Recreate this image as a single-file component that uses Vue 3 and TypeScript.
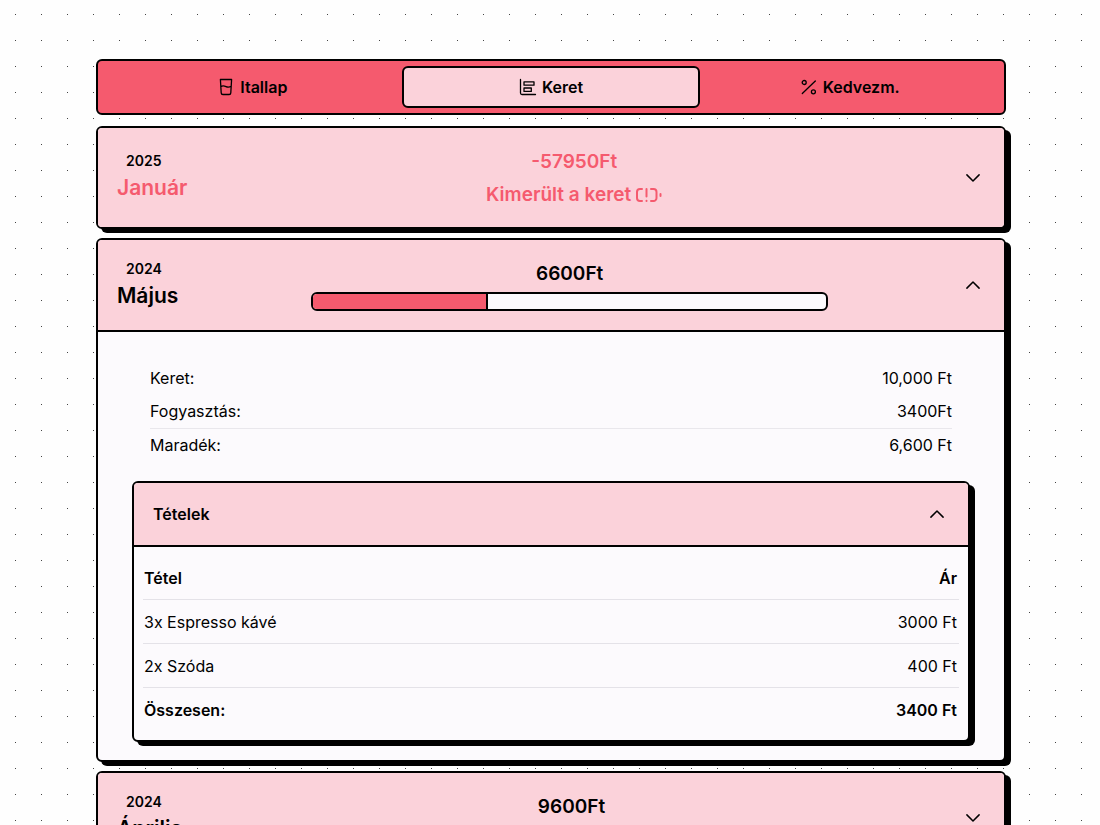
<script setup lang="ts">
import { reactive, ref } from 'vue'

interface Item {
  name: string
  price: string
}

interface Month {
  id: string
  year: string
  name: string
  balance: string
  depleted: boolean
  usedPercent: number
  open: boolean
  budget: string
  spent: string
  remaining: string
  items: Item[]
  itemsTotal: string
  itemsOpen: boolean
}

const tabs = [
  { id: 'drinks', label: 'Itallap' },
  { id: 'budget', label: 'Keret' },
  { id: 'discount', label: 'Kedvezm.' },
]
const activeTab = ref('budget')

const months = reactive<Month[]>([
  {
    id: '2025-01', year: '2025', name: 'Január', balance: '-57950Ft', depleted: true, usedPercent: 100,
    open: false, budget: '', spent: '', remaining: '', items: [], itemsTotal: '', itemsOpen: false,
  },
  {
    id: '2024-05', year: '2024', name: 'Május', balance: '6600Ft', depleted: false, usedPercent: 34,
    open: true, budget: '10,000 Ft', spent: '3400Ft', remaining: '6,600 Ft',
    items: [
      { name: '3x Espresso kávé', price: '3000 Ft' },
      { name: '2x Szóda', price: '400 Ft' },
    ],
    itemsTotal: '3400 Ft',
    itemsOpen: true,
  },
  {
    id: '2024-04', year: '2024', name: 'Április', balance: '9600Ft', depleted: false, usedPercent: 4,
    open: false, budget: '', spent: '', remaining: '', items: [], itemsTotal: '', itemsOpen: false,
  },
])
</script>

<template>
  <main class="page">
    <nav class="tabs">
      <button
        v-for="tab in tabs"
        :key="tab.id"
        type="button"
        class="tab"
        :class="{ active: tab.id === activeTab }"
        @click="activeTab = tab.id"
      >
        <svg v-if="tab.id === 'drinks'" class="icon" viewBox="0 0 18 18" aria-hidden="true">
          <path d="M3.400 1.500h11.200l-.8 13.400a1.700 1.700 0 0 1-1.700 1.600H5.900a1.700 1.700 0 0 1-1.700-1.600zM3.800 8.600c1.700-1.100 3.500-.8 5.200 0s3.500.7 5.200-.4" />
        </svg>
        <svg v-else-if="tab.id === 'budget'" class="icon" viewBox="0 0 18 18" aria-hidden="true">
          <path d="M1.500 1.500v13.500a1.500 1.500 0 0 0 1.500 1.500H16.500M5 3.800h10v3.400H5zM5 10h7.300v3.400H5z" />
        </svg>
        <svg v-else class="icon" viewBox="0 0 18 18" aria-hidden="true">
          <path d="M15.300 3L2.300 15.500" />
          <circle cx="4.200" cy="4.500" r="2" />
          <circle cx="13.400" cy="13.800" r="2" />
        </svg>
        <span>{{ tab.label }}</span>
      </button>
    </nav>

    <section v-for="month in months" :key="month.id" class="card" :class="{ depleted: month.depleted }">
      <button type="button" class="card-head" :aria-expanded="month.open" @click="month.open = !month.open">
        <span class="date">
          <span class="year">{{ month.year }}</span>
          <span class="name">{{ month.name }}</span>
        </span>
        <span class="status">
          <span class="amount">{{ month.balance }}</span>
          <span v-if="month.depleted" class="amount warning">
            Kimerült a keret
            <svg class="battery" viewBox="0 0 27 16" aria-hidden="true">
              <path d="M7 2H5a3 3 0 0 0-3 3v6a3 3 0 0 0 3 3h2M16 2h2.500a3 3 0 0 1 3 3v6a3 3 0 0 1-3 3H16M11.500 2v7.500M11.500 13.700v.3M25.500 7v2" />
            </svg>
          </span>
          <span v-else class="meter" role="progressbar" :aria-valuenow="month.usedPercent" aria-valuemin="0" aria-valuemax="100">
            <span class="meter-fill" :style="{ width: month.usedPercent + '%' }"></span>
          </span>
        </span>
        <svg class="chevron" :class="{ up: month.open }" viewBox="0 0 24 24" aria-hidden="true">
          <path d="M5.900 8.900L12 15l6.100-6.100" />
        </svg>
      </button>

      <div v-if="month.open" class="card-body">
        <dl class="summary">
          <div class="line"><dt>Keret:</dt><dd>{{ month.budget }}</dd></div>
          <div class="line"><dt>Fogyasztás:</dt><dd>{{ month.spent }}</dd></div>
          <div class="line total"><dt>Maradék:</dt><dd>{{ month.remaining }}</dd></div>
        </dl>

        <section class="card items">
          <button
            type="button"
            class="items-head"
            :aria-expanded="month.itemsOpen"
            @click="month.itemsOpen = !month.itemsOpen"
          >
            <span>Tételek</span>
            <svg class="chevron" :class="{ up: month.itemsOpen }" viewBox="0 0 24 24" aria-hidden="true">
              <path d="M5.900 8.900L12 15l6.100-6.100" />
            </svg>
          </button>
          <div v-if="month.itemsOpen" class="items-body">
            <table>
              <thead>
                <tr><th scope="col">Tétel</th><th scope="col">Ár</th></tr>
              </thead>
              <tbody>
                <tr v-for="item in month.items" :key="item.name">
                  <td>{{ item.name }}</td>
                  <td>{{ item.price }}</td>
                </tr>
              </tbody>
              <tfoot>
                <tr><th scope="row">Összesen:</th><td>{{ month.itemsTotal }}</td></tr>
              </tfoot>
            </table>
          </div>
        </section>
      </div>
    </section>
  </main>
</template>

<style>
body {
  background-color: #fefefe;
  background-image: linear-gradient(#fefefe 25px, transparent 25px), linear-gradient(90deg, #444 1px, transparent 1px);
  background-size: 26px 26px;
  background-position: 15px 15px;
}
</style>

<style scoped>
.page {
  padding: 59px 94px 0 96px;
  font-family: Inter, "Liberation Sans", sans-serif;
  font-size: 16px;
  line-height: 24px;
  color: #000;
}

button {
  font: inherit;
  color: inherit;
  cursor: pointer;
}

svg {
  fill: none;
  stroke: currentColor;
  stroke-linecap: round;
  stroke-linejoin: round;
}

.tabs {
  display: grid;
  grid-template-columns: repeat(3, 1fr);
  margin-bottom: 11px;
  padding: 5px;
  border: 2px solid #000;
  border-radius: 6px;
  background: #f55a6e;
}

.tab {
  display: flex;
  align-items: center;
  justify-content: center;
  gap: 5px;
  height: 42px;
  padding: 0;
  border: 2px solid transparent;
  border-radius: 6px;
  background: transparent;
  font-weight: 600;
}

.tab.active {
  border-color: #000;
  background: #fbd2da;
}

.icon {
  width: 18px;
  height: 18px;
  stroke-width: 1.3;
}

.card {
  margin-bottom: 9px;
  border: 2px solid #000;
  border-radius: 6px;
  background: #fcfafd;
  box-shadow: 5px 4px 0 #000;
  overflow: hidden;
}

.card-head,
.items-head {
  display: flex;
  align-items: center;
  width: 100%;
  border: 0;
  background: #fbd2da;
}

.card-head {
  padding: 16px 19px;
  font-weight: 600;
}

.date {
  display: flex;
  flex-direction: column;
  align-items: flex-start;
}

.year {
  padding-left: 9px;
  font-size: 14px;
  line-height: 20px;
}

.name {
  font-size: 21px;
  line-height: 33px;
}

.status {
  display: flex;
  flex: 1;
  flex-direction: column;
  align-items: center;
  padding-top: 1px;
}

.amount {
  display: flex;
  align-items: center;
  gap: 4px;
  font-size: 19px;
  line-height: 33px;
}

.depleted .name,
.depleted .amount {
  color: #f55a6e;
}

.battery {
  width: 27px;
  height: 16px;
  stroke-width: 2;
}

.meter {
  box-sizing: border-box;
  width: 66%;
  height: 19px;
  margin: 2px 0 3px;
  border: 2px solid #000;
  border-radius: 6px;
  background: #fcfafd;
  overflow: hidden;
}

.meter-fill {
  display: block;
  box-sizing: border-box;
  height: 100%;
  border-right: 2px solid #000;
  background: #f55a6e;
}

.chevron {
  width: 24px;
  height: 24px;
  stroke-width: 1.5;
}

.chevron.up {
  transform: rotate(180deg);
}

.card-body {
  padding: 30px 34px 18px;
  border-top: 2px solid #000;
}

.summary {
  margin: 0 18px 19px;
}

.line {
  display: flex;
  justify-content: space-between;
  line-height: 33px;
}

.line dd {
  margin: 0;
}

.line.total {
  border-top: 1px solid #e9e7ec;
}

.items {
  margin: 0;
}

.items-head {
  justify-content: space-between;
  padding: 19px;
  font-weight: 600;
}

.items-body {
  padding: 9px;
  border-top: 2px solid #000;
}

table {
  width: 100%;
  border-collapse: collapse;
}

th,
td {
  height: 43px;
  padding: 0 2px 0 1px;
  text-align: left;
  font-weight: 400;
}

th,
tfoot td {
  font-weight: 600;
}

th:last-child,
td:last-child {
  text-align: right;
}

tbody tr,
tfoot tr {
  border-top: 1px solid #e4e2e8;
}
</style>
